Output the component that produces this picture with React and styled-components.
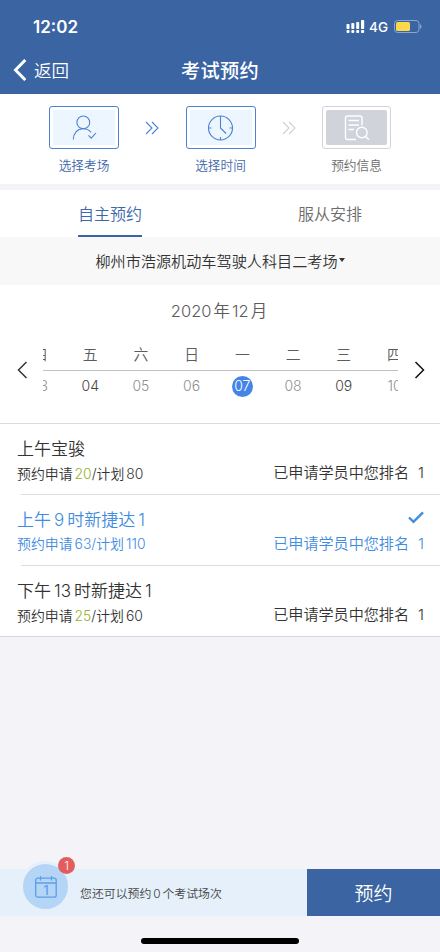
import React, { useState } from 'react'
import styled, { createGlobalStyle, css } from 'styled-components'

const STEPS = [
   { id: 'place', title: '选择考场', active: true },
   { id: 'time', title: '选择时间', active: true },
   { id: 'info', title: '预约信息', active: false },
]

const TABS = ['自主预约', '服从安排']

const DAYS = [
   { week: '四', date: '03' },
   { week: '五', date: '04', open: true },
   { week: '六', date: '05' },
   { week: '日', date: '06' },
   { week: '一', date: '07', selected: true },
   { week: '二', date: '08' },
   { week: '三', date: '09', open: true },
   { week: '四', date: '10' },
]

const SESSIONS = [
   { id: 1, title: '上午宝骏', applied: 20, plan: 80, rank: 1 },
   { id: 2, title: '上午 9 时新捷达 1', applied: 63, plan: 110, rank: 1 },
   { id: 3, title: '下午 13 时新捷达 1', applied: 25, plan: 60, rank: 1 },
]

const StepIcon = ({ id }) => {
   if (id === 'place') {
      return (
         <StrokeSvg width="28" height="28" viewBox="0 0 28 28">
            <circle cx="13.3" cy="8.4" r="6.4" />
            <path d="M3.3 25.5c0-6 4-10.7 9.7-10.7 3.6 0 6.2 1 8 3.6" />
            <path d="M18.5 21.3l2.7 2.9 4.8-5.2" />
         </StrokeSvg>
      )
   }
   if (id === 'time') {
      return (
         <StrokeSvg width="28" height="28" viewBox="0 0 28 28">
            <circle cx="13.5" cy="14" r="12" />
            <path d="M13.5 2v12l5.5 5.5M13.5 23v3M1.5 14h3M22.5 14h3" />
         </StrokeSvg>
      )
   }
   return (
      <StrokeSvg width="28" height="28" viewBox="0 0 28 28" $bold>
         <path d="M13 25.5H4.5a2 2 0 0 1-2-2V4a2 2 0 0 1 2-2H17a2 2 0 0 1 2 2v7.5" />
         <path d="M5.5 6.5H16M5.5 11H16M5.5 15.5H11" />
         <circle cx="18.8" cy="18.5" r="5.3" />
         <path d="M22.6 22.3l3.2 3.4" />
      </StrokeSvg>
   )
}

const Chevron = ({ d, dark }) => (
   <svg width="11" height="18" viewBox="0 0 11 18">
      <path
         d={d}
         fill="none"
         stroke={dark ? '#111' : '#333'}
         strokeWidth="1.5"
      />
   </svg>
)

const App = () => {
   const [tab, setTab] = useState(0)
   const [selectedId, setSelectedId] = useState(2)

   return (
      <>
         <GlobalStyle />
         <Page>
            <StatusBar>
               <Time>12:02</Time>
               <StatusIcons>
                  <svg width="19" height="14" viewBox="0 0 19 14" fill="#fff">
                     <rect x="0.5" y="4" width="3" height="5" rx="0.8" />
                     <rect x="5.3" y="3" width="3" height="6" rx="0.8" />
                     <rect x="10.2" y="2" width="3" height="7" rx="0.8" />
                     <rect x="15" y="0" width="3.2" height="9" rx="0.8" />
                     <rect x="0.5" y="10" width="3" height="3" rx="1" />
                     <rect x="5.3" y="10" width="3" height="3" rx="1" />
                     <rect x="10.2" y="10" width="3" height="3" rx="1" />
                     <rect x="15" y="10" width="3.2" height="3" rx="1" />
                  </svg>
                  <Network>4G</Network>
                  <svg width="28" height="13" viewBox="0 0 28 13">
                     <rect
                        x="0.5"
                        y="0.5"
                        width="24.5"
                        height="12"
                        rx="3"
                        fill="none"
                        stroke="#8ba5cd"
                     />
                     <rect x="2" y="2" width="14" height="9" rx="1.5" fill="#fbd94b" />
                     <path d="M26 4.2c2 .6 2 4 0 4.6z" fill="#8ba5cd" />
                  </svg>
               </StatusIcons>
            </StatusBar>

            <NavBar>
               <BackButton>
                  <svg width="14" height="22" viewBox="0 0 14 22">
                     <path
                        d="M12.3 1L2.5 11l9.8 10"
                        fill="none"
                        stroke="#fff"
                        strokeWidth="3"
                     />
                  </svg>
                  返回
               </BackButton>
               <NavTitle>考试预约</NavTitle>
            </NavBar>

            <Steps>
               {STEPS.map((step, index) => (
                  <React.Fragment key={step.id}>
                     {index > 0 && (
                        <StepArrow $active={index === 1}>
                           <StrokeSvg width="14" height="14" viewBox="0 0 14 14">
                              <path d="M1 1l6 6-6 6M7 1l6 6-6 6" />
                           </StrokeSvg>
                        </StepArrow>
                     )}
                     <Step $active={step.active}>
                        <StepFrame $active={step.active}>
                           <StepInner $active={step.active}>
                              <StepIcon id={step.id} />
                           </StepInner>
                        </StepFrame>
                        {step.title}
                     </Step>
                  </React.Fragment>
               ))}
            </Steps>

            <Tabs>
               {TABS.map((name, index) => (
                  <Tab key={name} onClick={() => setTab(index)}>
                     <TabLabel $active={tab === index}>{name}</TabLabel>
                  </Tab>
               ))}
            </Tabs>

            <PlaceSelect>
               柳州市浩源机动车驾驶人科目二考场
               <Caret />
            </PlaceSelect>

            <Calendar>
               <Month>
                  2020<span>年</span>12<span>月</span>
               </Month>
               <CalendarRow>
                  <ArrowButton>
                     <Chevron d="M9.5 1L1.5 9l8 8" />
                  </ArrowButton>
                  <DaysViewport>
                     <Days>
                        {DAYS.map((day) => (
                           <Day key={day.date}>
                              <Week>{day.week}</Week>
                              <DateCell>
                                 <DateText
                                    $open={day.open}
                                    $selected={day.selected}
                                 >
                                    {day.date}
                                 </DateText>
                              </DateCell>
                           </Day>
                        ))}
                     </Days>
                  </DaysViewport>
                  <ArrowButton>
                     <Chevron d="M1.5 1l8 8-8 8" dark />
                  </ArrowButton>
               </CalendarRow>
            </Calendar>

            <SessionList>
               {SESSIONS.map((session) => {
                  const selected = session.id === selectedId
                  return (
                     <Session
                        key={session.id}
                        $selected={selected}
                        onClick={() => setSelectedId(session.id)}
                     >
                        <SessionLine>
                           <SessionTitle>{session.title}</SessionTitle>
                           {selected && (
                              <CheckIcon width="16" height="13" viewBox="0 0 16 13">
                                 <path
                                    d="M1 6.5l4.5 4.3L15 1.3"
                                    fill="none"
                                    stroke="#3f8ce0"
                                    strokeWidth="2.4"
                                 />
                              </CheckIcon>
                           )}
                        </SessionLine>
                        <SessionLine>
                           <Quota $selected={selected}>
                              预约申请
                              <Applied $selected={selected}>
                                 {session.applied}
                              </Applied>
                              /计划<Plan>{session.plan}</Plan>
                           </Quota>
                           <Rank>
                              已申请学员中您排名<span>{session.rank}</span>
                           </Rank>
                        </SessionLine>
                     </Session>
                  )
               })}
            </SessionList>

            <Spacer />

            <Footer>
               <FooterInfo>
                  <CartCircle>
                     <svg width="22" height="22" viewBox="0 0 22 22">
                        <g fill="none" stroke="#5b9fe8" strokeWidth="1.3">
                           <rect x="0.7" y="2.2" width="20.5" height="19" rx="2" />
                           <path d="M0.7 7h20.5M5.5 0v4.5M16.5 0v4.5" />
                        </g>
                        <text
                           x="11"
                           y="18.5"
                           fontSize="12.5"
                           fontWeight="500"
                           textAnchor="middle"
                           fill="#5b9fe8"
                        >
                           1
                        </text>
                     </svg>
                     <Badge>1</Badge>
                  </CartCircle>
                  <FooterText>您还可以预约 0 个考试场次</FooterText>
               </FooterInfo>
               <BookButton>预约</BookButton>
            </Footer>
            <HomeArea>
               <HomeIndicator />
            </HomeArea>
         </Page>
      </>
   )
}

const GlobalStyle = createGlobalStyle`
   * {
      box-sizing: border-box;
   }
   body {
      margin: 0;
      background-color: #f3f3f8;
      font-family: Inter, "Noto Sans CJK SC", sans-serif;
      font-weight: 350;
   }
   button {
      border: none;
      padding: 0;
      background-color: transparent;
      font-family: inherit;
      font-weight: inherit;
      color: inherit;
   }
   svg {
      display: block;
      flex-shrink: 0;
   }
`
const Page = styled.div`
   width: 440px;
   height: 952px;
   display: flex;
   flex-direction: column;
   overflow: hidden;
   background-color: #f3f3f8;
`
const StrokeSvg = styled.svg`
   fill: none;
   stroke: currentColor;
   stroke-width: ${({ $bold }) => ($bold ? 1.4 : 1.1)};
`
const StatusBar = styled.div`
   height: 47px;
   padding: 7px 18px 0 33px;
   display: flex;
   align-items: center;
   justify-content: space-between;
   background-color: #3b64a3;
   color: white;
`
const Time = styled.span`
   font-size: 17px;
   font-weight: 600;
`
const StatusIcons = styled.div`
   padding-bottom: 1px;
   display: flex;
   align-items: center;
`
const Network = styled.span`
   margin: 0 6px 0 4px;
   font-size: 13.5px;
   font-weight: 500;
`
const NavBar = styled.div`
   height: 47px;
   padding: 0 13px 2px;
   display: grid;
   grid-template-columns: 1fr auto 1fr;
   align-items: center;
   background-color: #3b64a3;
   color: white;
`
const BackButton = styled.button`
   display: flex;
   align-items: center;
   gap: 7px;
   font-size: 17.5px;
`
const NavTitle = styled.h1`
   margin: 0;
   font-size: 19.2px;
   font-weight: 500;
   letter-spacing: 0.3px;
`
const Steps = styled.div`
   height: 90px;
   padding: 12px 49px 0;
   display: flex;
   justify-content: space-between;
   background-color: white;
`
const Step = styled.div`
   width: 70px;
   display: flex;
   flex-direction: column;
   align-items: center;
   gap: 7px;
   font-size: 12.7px;
   line-height: 20px;
   color: ${({ $active }) => ($active ? '#3f68a8' : '#6c6c6c')};

   &:last-child {
      width: 69px;
   }
`
const StepFrame = styled.div`
   width: 100%;
   height: 43px;
   padding: 3px;
   border: 1px solid ${({ $active }) => ($active ? '#4a83d3' : '#d3d4d8')};
   border-radius: 3px;
   background-color: white;
`
const StepInner = styled.div`
   height: 100%;
   display: flex;
   align-items: center;
   justify-content: center;
   border-radius: 2px;
   background-color: ${({ $active }) => ($active ? '#edf6fe' : '#d0d3d9')};
   color: ${({ $active }) => ($active ? '#4a83d3' : '#ffffff')};
`
const StepArrow = styled.div`
   height: 43px;
   display: flex;
   align-items: center;
   color: ${({ $active }) => ($active ? '#4a83d3' : '#d0d0d2')};
`
const Tabs = styled.div`
   height: 47px;
   margin-top: 6px;
   display: flex;
   background-color: white;
`
const Tab = styled.button`
   flex: 1;
   display: flex;
   justify-content: center;
`
const TabLabel = styled.span`
   height: 47px;
   line-height: 48px;
   font-size: 16px;
   color: #6c6c6c;
   ${({ $active }) =>
      $active &&
      css`
         color: #3b68aa;
         border-bottom: 2px solid #3b64a3;
      `}
`
const PlaceSelect = styled.div`
   height: 48px;
   padding-bottom: 2px;
   display: flex;
   align-items: center;
   justify-content: center;
   gap: 1px;
   background-color: #f8f8f8;
   font-size: 15.15px;
   color: #333;
`
const Caret = styled.span`
   border: 3.5px solid transparent;
   border-top: 4px solid #333;
   border-bottom: none;
`
const Calendar = styled.div`
   height: 139px;
   padding-top: 14px;
   background-color: white;
   border-bottom: 1px solid #dcdcdc;
`
const Month = styled.div`
   text-align: center;
   font-size: 16.5px;
   line-height: 24px;
   color: #5c5c5c;

   span {
      margin: 0 2px;
   }
`
const CalendarRow = styled.div`
   height: 94px;
   display: flex;
   align-items: center;
`
const ArrowButton = styled.button`
   width: 43px;
   padding-left: 1px;
   display: flex;
   justify-content: center;

   &:last-child {
      width: 42px;
      padding-left: 0;
   }
`
const DaysViewport = styled.div`
   width: 355px;
   overflow: hidden;
`
const Days = styled.div`
   width: 405.6px;
   margin-left: -28.8px;
   display: flex;
`
const Day = styled.div`
   flex: 1;
   text-align: center;
`
const Week = styled.div`
   height: 32px;
   line-height: 32px;
   font-size: 14.8px;
   color: #5c5c5c;
   border-bottom: 1px solid #c2c2c2;
`
const DateCell = styled.div`
   height: 31px;
   display: flex;
   align-items: center;
   justify-content: center;
`
const DateText = styled.span`
   width: 21px;
   height: 21px;
   border-radius: 50%;
   line-height: 20px;
   font-size: 14px;
   color: ${({ $open }) => ($open ? '#444' : '#909090')};
   ${({ $selected }) =>
      $selected &&
      css`
         color: white;
         background-color: #4484e8;
      `}
`
const SessionList = styled.div`
   background-color: white;
   border-bottom: 1px solid #d8d8dc;
`
const Session = styled.div`
   height: 71px;
   padding: 12px 16px 0 17px;
   color: ${({ $selected }) => ($selected ? '#3f8ce0' : '#333')};
   background-image: linear-gradient(#dcdcdc, #dcdcdc);
   background-size: 100% 1px;
   background-position: 21px 100%;
   background-repeat: no-repeat;

   &:last-child {
      height: 70px;
      background-image: none;
   }
`
const SessionLine = styled.div`
   height: 26px;
   display: flex;
   align-items: center;
   justify-content: space-between;

   & + & {
      height: 22px;
   }
`
const SessionTitle = styled.span`
   font-size: 17px;
   line-height: 26px;
   word-spacing: -1.8px;
`
const CheckIcon = styled.svg`
   margin-bottom: 5px;
`
const Quota = styled.span`
   padding-top: ${({ $selected }) => ($selected ? 0 : 2)}px;
   font-size: 13.9px;
   line-height: 22px;
`
const Applied = styled.span`
   margin-left: 2px;
   color: ${({ $selected }) => ($selected ? 'inherit' : '#95b02c')};
`
const Plan = styled.span`
   margin-left: 2px;
`
const Rank = styled.span`
   font-size: 15.1px;
   line-height: 22px;

   span {
      margin-left: 9px;
   }
`
const Spacer = styled.div`
   flex: 1;
`
const Footer = styled.div`
   height: 47px;
   display: flex;
`
const FooterInfo = styled.div`
   width: 307px;
   padding-left: 20px;
   display: flex;
   align-items: center;
   background-color: #e5f0fa;
`
const CartCircle = styled.div`
   position: relative;
   width: 51px;
   height: 51px;
   margin-top: -12px;
   display: flex;
   flex-shrink: 0;
   align-items: center;
   justify-content: center;
   border: 3px solid #e5f0fa;
   border-radius: 50%;
   background-color: #b5d5f7;
`
const Badge = styled.span`
   position: absolute;
   top: -7px;
   right: -7px;
   width: 17px;
   height: 17px;
   border-radius: 50%;
   background-color: #e35d5f;
   color: white;
   font-size: 12px;
   line-height: 17px;
   text-align: center;
`
const FooterText = styled.span`
   margin-left: 9px;
   font-size: 11.9px;
   word-spacing: -1.5px;
   color: #444;
`
const BookButton = styled.button`
   flex: 1;
   background-color: #3b64a3;
   color: white;
   font-size: 19px;
`
const HomeArea = styled.div`
   height: 36px;
   padding-top: 22px;
`
const HomeIndicator = styled.div`
   width: 158px;
   height: 6px;
   margin: 0 auto;
   border-radius: 3px;
   background-color: black;
`

export default App
